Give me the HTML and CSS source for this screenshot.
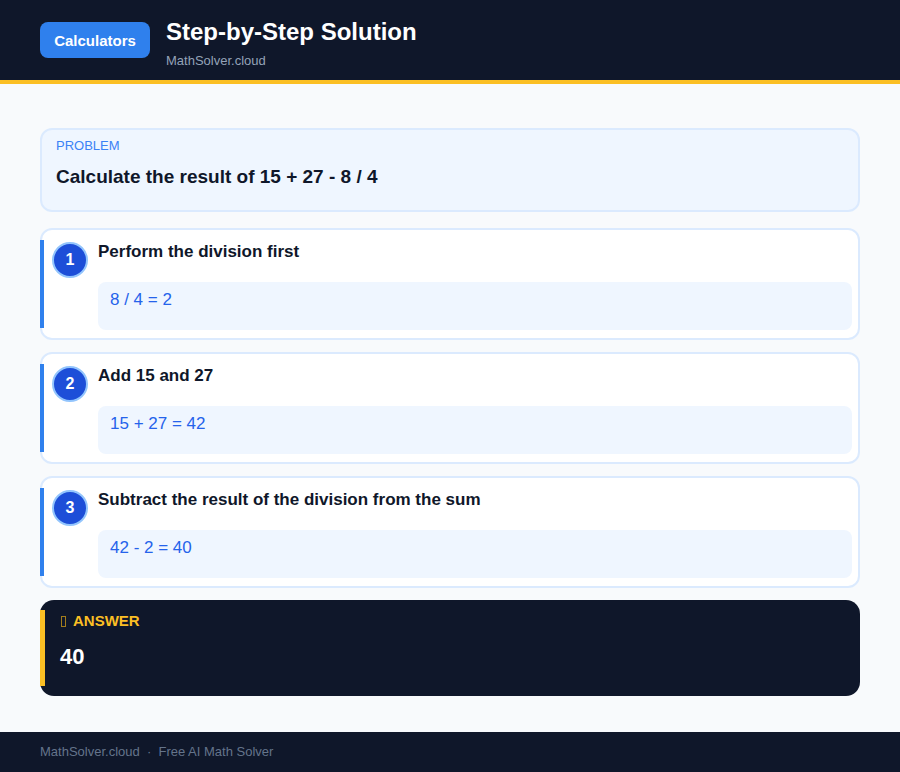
FILE: index.html
```html
<!DOCTYPE html>
<html>
<head>
<meta charset="utf-8">
<link rel="stylesheet" href="styles.css">
</head>
<body>
<header class="top">
  <a class="btn">Calculators</a>
  <div class="titles">
    <h1 class="title">Step-by-Step Solution</h1>
    <div class="subtitle">MathSolver.cloud</div>
  </div>
</header>
<main class="main">
  <section class="problem">
    <div class="label">PROBLEM</div>
    <div class="question">Calculate the result of 15 + 27 - 8 / 4</div>
  </section>
  <section class="step">
    <div class="num">1</div>
    <div class="body">
      <div class="step-title">Perform the division first</div>
      <div class="eq">8 / 4 = 2</div>
    </div>
  </section>
  <section class="step">
    <div class="num">2</div>
    <div class="body">
      <div class="step-title">Add 15 and 27</div>
      <div class="eq">15 + 27 = 42</div>
    </div>
  </section>
  <section class="step">
    <div class="num">3</div>
    <div class="body">
      <div class="step-title">Subtract the result of the division from the sum</div>
      <div class="eq">42 - 2 = 40</div>
    </div>
  </section>
  <section class="answer">
    <div class="ans-label"><span class="tofu"></span>ANSWER</div>
    <div class="ans-value">40</div>
  </section>
</main>
<footer class="foot">MathSolver.cloud &nbsp;·&nbsp; Free AI Math Solver</footer>
</body>
</html>
```
FILE: styles.css
```css
* { box-sizing: border-box; }
html, body { margin: 0; padding: 0; }
body {
  font-family: "Liberation Sans", Arial, sans-serif;
  background: #f8fafc;
  color: #0f172a;
}
.top {
  height: 84px;
  background: #0f172a;
  border-bottom: 4px solid #fbbf24;
  display: flex;
  align-items: flex-start;
  padding: 22px 40px 0;
  gap: 16px;
}
.btn {
  display: flex;
  align-items: center;
  justify-content: center;
  width: 110px;
  height: 36px;
  background: #2f80ed;
  color: #fff;
  font-weight: bold;
  font-size: 15px;
  border-radius: 8px;
}
.titles { display: flex; flex-direction: column; margin-top: -5px; }
.title {
  margin: 0;
  color: #fff;
  font-size: 24px;
  line-height: 29px;
  font-weight: bold;
}
.subtitle {
  color: #94a3b8;
  font-size: 13px;
  line-height: 16px;
  margin-top: 7px;
}
.main {
  padding: 44px 40px 36px;
  display: flex;
  flex-direction: column;
  gap: 12px;
}
.problem {
  background: #eff6ff;
  border: 2px solid #dbeafe;
  border-radius: 12px;
  height: 84px;
  padding: 8px 14px 0;
  margin-bottom: 4px;
}
.label {
  color: #3b82f6;
  font-size: 13px;
  line-height: 16px;
}
.question {
  margin-top: 11px;
  font-size: 19px;
  line-height: 23px;
  font-weight: bold;
  color: #0f172a;
}
.step {
  position: relative;
  height: 112px;
  background: #fff;
  border: 2px solid #dbeafe;
  border-radius: 12px;
  display: flex;
  gap: 10px;
  padding: 12px 6px 8px 10px;
}
.step::before {
  content: "";
  position: absolute;
  left: -2px;
  top: 10px;
  bottom: 10px;
  width: 4px;
  background: #2f80ed;
}
.num {
  flex: none;
  width: 36px;
  height: 36px;
  border-radius: 50%;
  background: #1d4ed8;
  border: 2px solid #93c5fd;
  color: #fff;
  font-weight: bold;
  font-size: 16px;
  display: flex;
  align-items: center;
  justify-content: center;
}
.body { flex: 1; display: flex; flex-direction: column; }
.step-title {
  font-size: 17px;
  line-height: 20px;
  font-weight: bold;
  color: #0f172a;
}
.eq {
  margin-top: 20px;
  flex: 1;
  background: #eff6ff;
  border-radius: 8px;
  padding: 8px 12px 0;
  color: #2563eb;
  font-size: 17px;
  line-height: 20px;
}
.answer {
  position: relative;
  height: 96px;
  background: #0f172a;
  border-radius: 14px;
  padding: 12px 20px 0;
}
.answer::before {
  content: "";
  position: absolute;
  left: 0;
  top: 10px;
  bottom: 10px;
  width: 5px;
  background: #fbbf24;
}
.ans-label {
  color: #fbbf24;
  font-weight: bold;
  font-size: 15px;
  line-height: 18px;
  display: flex;
  align-items: center;
  gap: 7px;
}
.tofu {
  display: inline-block;
  width: 5px;
  height: 11px;
  border: 1px solid #a27d1c;
  margin-left: 1px;
}
.ans-value {
  color: #fff;
  font-weight: bold;
  font-size: 22px;
  line-height: 26px;
  margin-top: 14px;
}
.foot {
  height: 40px;
  background: #0f172a;
  color: #64748b;
  font-size: 13px;
  line-height: 40px;
  padding: 0 40px;
}
```
